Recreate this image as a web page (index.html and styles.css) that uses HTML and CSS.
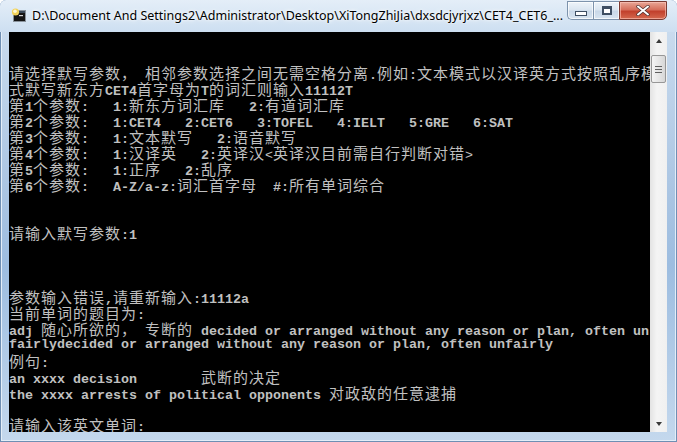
FILE: index.html
```html
<!DOCTYPE html>
<html lang="zh-CN">
<head>
    <meta charset="UTF-8">
    <title>CET4_CET6</title>
    <link rel="stylesheet" href="styles.css">
</head>
<body>
    <div class="window">
        <div class="titlebar">
            <svg class="app-icon" viewBox="0 0 16 16" width="16" height="16">
                <rect x="2.5" y="3.5" width="12" height="11" fill="#151515" stroke="#8a939c"/>
                <rect x="3" y="4" width="11" height="2" fill="#3b4a5a"/>
                <circle cx="4.5" cy="5" r="3.6" fill="#f3d35a"/>
                <circle cx="4" cy="4.3" r="1.8" fill="#fff7d2"/>
                <rect x="8" y="8" width="4" height="1.2" fill="#d8d8d8"/>
            </svg>
            <span class="title">D:\Document And Settings2\Administrator\Desktop\XiTongZhiJia\dxsdcjyrjxz\CET4_CET6_...</span>
            <div class="caption">
                <div class="cap-btn cap-min"><span class="min-glyph"></span></div>
                <div class="cap-btn cap-max"><span class="max-glyph"></span></div>
                <div class="cap-btn cap-close">
                    <svg viewBox="0 0 14 11" width="14" height="11">
                        <path d="M2 1.5 L12 9.5 M12 1.5 L2 9.5" stroke="#4a3030" stroke-width="3.4" stroke-linecap="round"/>
                        <path d="M2 1.5 L12 9.5 M12 1.5 L2 9.5" stroke="#ffffff" stroke-width="2" stroke-linecap="round"/>
                    </svg>
                </div>
            </div>
        </div>

        <div class="client">
            <div class="console">
                <div class="ln"></div>
                <div class="ln"></div>
                <div class="ln"><span class="z">请选择默写参数，</span> <span class="z">相邻参数选择之间无需空格分离</span>.<span class="z">例如</span>:<span class="z">文本模式以汉译英方式按照乱序模</span></div>
                <div class="ln"><span class="z">式默写新东方</span>CET4<span class="z">首字母为</span>T<span class="z">的词汇则输入</span>11112T</div>
                <div class="ln"><span class="z">第</span>1<span class="z">个参数</span>:   1:<span class="z">新东方词汇库</span>   2:<span class="z">有道词汇库</span></div>
                <div class="ln"><span class="z">第</span>2<span class="z">个参数</span>:   1:CET4   2:CET6   3:TOFEL   4:IELT   5:GRE   6:SAT</div>
                <div class="ln"><span class="z">第</span>3<span class="z">个参数</span>:   1:<span class="z">文本默写</span>   2:<span class="z">语音默写</span></div>
                <div class="ln"><span class="z">第</span>4<span class="z">个参数</span>:   1:<span class="z">汉译英</span>   2:<span class="z">英译汉</span><span class="thin">&lt;</span><span class="z">英译汉目前需自行判断对错</span><span class="thin">&gt;</span></div>
                <div class="ln"><span class="z">第</span>5<span class="z">个参数</span>:   1:<span class="z">正序</span>   2:<span class="z">乱序</span></div>
                <div class="ln"><span class="z">第</span>6<span class="z">个参数</span>:   A-Z/a-z:<span class="z">词汇首字母</span>  #:<span class="z">所有单词综合</span></div>
                <div class="ln"></div>
                <div class="ln"></div>
                <div class="ln"><span class="z">请输入默写参数</span>:1</div>
                <div class="ln"></div>
                <div class="ln"></div>
                <div class="ln"></div>
                <div class="ln"><span class="z">参数输入错误</span>,<span class="z">请重新输入</span>:11112a</div>
                <div class="ln"><span class="z">当前单词的题目为</span>:</div>
                <div class="ln">adj <span class="z">随心所欲的，</span> <span class="z">专断的</span> decided or arranged without any reason or plan, often un</div>
                <div class="ln">fairlydecided or arranged without any reason or plan, often unfairly</div>
                <div class="ln"><span class="z">例句</span>:</div>
                <div class="ln">an xxxx decision        <span class="z">武断的决定</span></div>
                <div class="ln">the xxxx arrests of political opponents <span class="z">对政敌的任意逮捕</span></div>
                <div class="ln"></div>
                <div class="ln"><span class="z">请输入该英文单词</span>:</div>
            </div>

            <div class="scrollbar">
                <div class="sb-btn"><span class="arrow-up"></span></div>
                <div class="sb-track">
                    <div class="sb-thumb"><span class="grip"></span></div>
                </div>
                <div class="sb-btn"><span class="arrow-down"></span></div>
            </div>
        </div>
    </div>
</body>
</html>
```

FILE: styles.css
```css
body {
    margin: 0;
    background: #ffffff;
}

.window {
    width: 677px;
    height: 442px;
    display: flex;
    flex-direction: column;
    box-sizing: border-box;
    border-radius: 6px 6px 0 0;
    overflow: hidden;
    background: linear-gradient(to bottom, #dbe7f3 0, #c9dbee 30px, #a9c4e2 45%, #9dbde0 60%, #c4d8ed 100%);
    box-shadow: inset 0 0 0 1px #6f8fb3, inset 0 0 0 2px #e4eef8;
}

/* title bar */

.titlebar {
    height: 32px;
    flex: none;
    display: flex;
    align-items: flex-start;
    padding-left: 11px;
    background: linear-gradient(to bottom, #e4eef8, #cddff1);
}

.app-icon {
    margin-top: 7px;
    margin-right: 5px;
    flex: none;
}

.title {
    flex: 1;
    margin-top: 8px;
    font-family: "Noto Sans", "Open Sans", sans-serif;
    font-size: 12.5px;
    line-height: 16px;
    color: #000000;
    white-space: nowrap;
    overflow: hidden;
    text-shadow: 0 0 6px #ffffff, 0 0 3px #ffffff;
}

.caption {
    display: flex;
    flex: none;
    margin-right: 10px;
    margin-top: 1px;
}

.cap-btn {
    height: 19px;
    box-sizing: border-box;
    display: flex;
    align-items: center;
    justify-content: center;
    border: 1px solid #7d93ac;
    background: linear-gradient(to bottom, #eef4fa 0, #dbe6f1 45%, #c9d8e8 55%, #d8e4f0 100%);
    box-shadow: inset 0 0 0 1px rgba(255,255,255,0.7);
}

.cap-min {
    width: 26px;
    border-radius: 0 0 0 5px;
    border-right: none;
}

.cap-max {
    width: 26px;
    border-right: none;
}

.cap-close {
    width: 48px;
    border-radius: 0 0 5px 0;
    border-color: #7a3a32;
    background: linear-gradient(to bottom, #e8a796 0, #d66f5c 45%, #c2402c 55%, #d5694f 100%);
    box-shadow: inset 0 0 0 1px rgba(255,200,190,0.6);
}

.min-glyph {
    width: 10px;
    height: 3px;
    margin-top: 5px;
    background: #ffffff;
    border: 1px solid #3e4e62;
}

.max-glyph {
    width: 8px;
    height: 6px;
    border: 1px solid #3e4e62;
    border-top-width: 2px;
    background: #ffffff;
    box-shadow: inset 0 0 0 1px #3e4e62;
    box-sizing: content-box;
}

/* console */

.client {
    display: flex;
    height: 400px;
    flex: none;
    margin: 0 10px 0 9px;
}

.console {
    width: 641px;
    flex: none;
    box-sizing: border-box;
    padding-top: 1px;
    background: #000000;
    color: #c0c0c0;
    font-family: "Liberation Mono", monospace;
    font-weight: bold;
    font-size: 13.333px;
    line-height: 16px;
    overflow: hidden;
    text-autospace: no-autospace;
    text-spacing-trim: space-all;
    font-kerning: none;
}

.ln {
    height: 16px;
    white-space: pre;
}

.z {
    font-family: "Noto Sans CJK SC", sans-serif;
    font-weight: normal;
    font-size: 15px;
    letter-spacing: 1px;
}

.thin {
    font-weight: normal;
}

/* scrollbar */

.scrollbar {
    width: 17px;
    flex: none;
    display: flex;
    flex-direction: column;
    background: linear-gradient(to right, #e3e3e3, #f4f4f4 40%, #f0f0f0);
}

.sb-btn {
    height: 17px;
    flex: none;
    display: flex;
    align-items: center;
    justify-content: center;
}

.arrow-up {
    width: 0;
    height: 0;
    border-left: 3px solid transparent;
    border-right: 3px solid transparent;
    border-bottom: 4px solid #3a3a3a;
}

.arrow-down {
    width: 0;
    height: 0;
    border-left: 3px solid transparent;
    border-right: 3px solid transparent;
    border-top: 4px solid #3a3a3a;
}

.sb-track {
    flex: 1;
    padding-top: 6px;
}

.sb-thumb {
    width: 15px;
    height: 28px;
    margin-left: 1px;
    box-sizing: border-box;
    border: 1px solid #979797;
    border-radius: 2px;
    background: linear-gradient(to right, #f4f4f4, #e6e6e6 50%, #d7d7d7);
    display: flex;
    align-items: center;
    justify-content: center;
}

.grip {
    width: 7px;
    height: 5px;
    border-top: 1px solid #606060;
    border-bottom: 1px solid #606060;
    background: linear-gradient(to bottom, transparent 2px, #606060 2px, #606060 3px, transparent 3px);
}
```
